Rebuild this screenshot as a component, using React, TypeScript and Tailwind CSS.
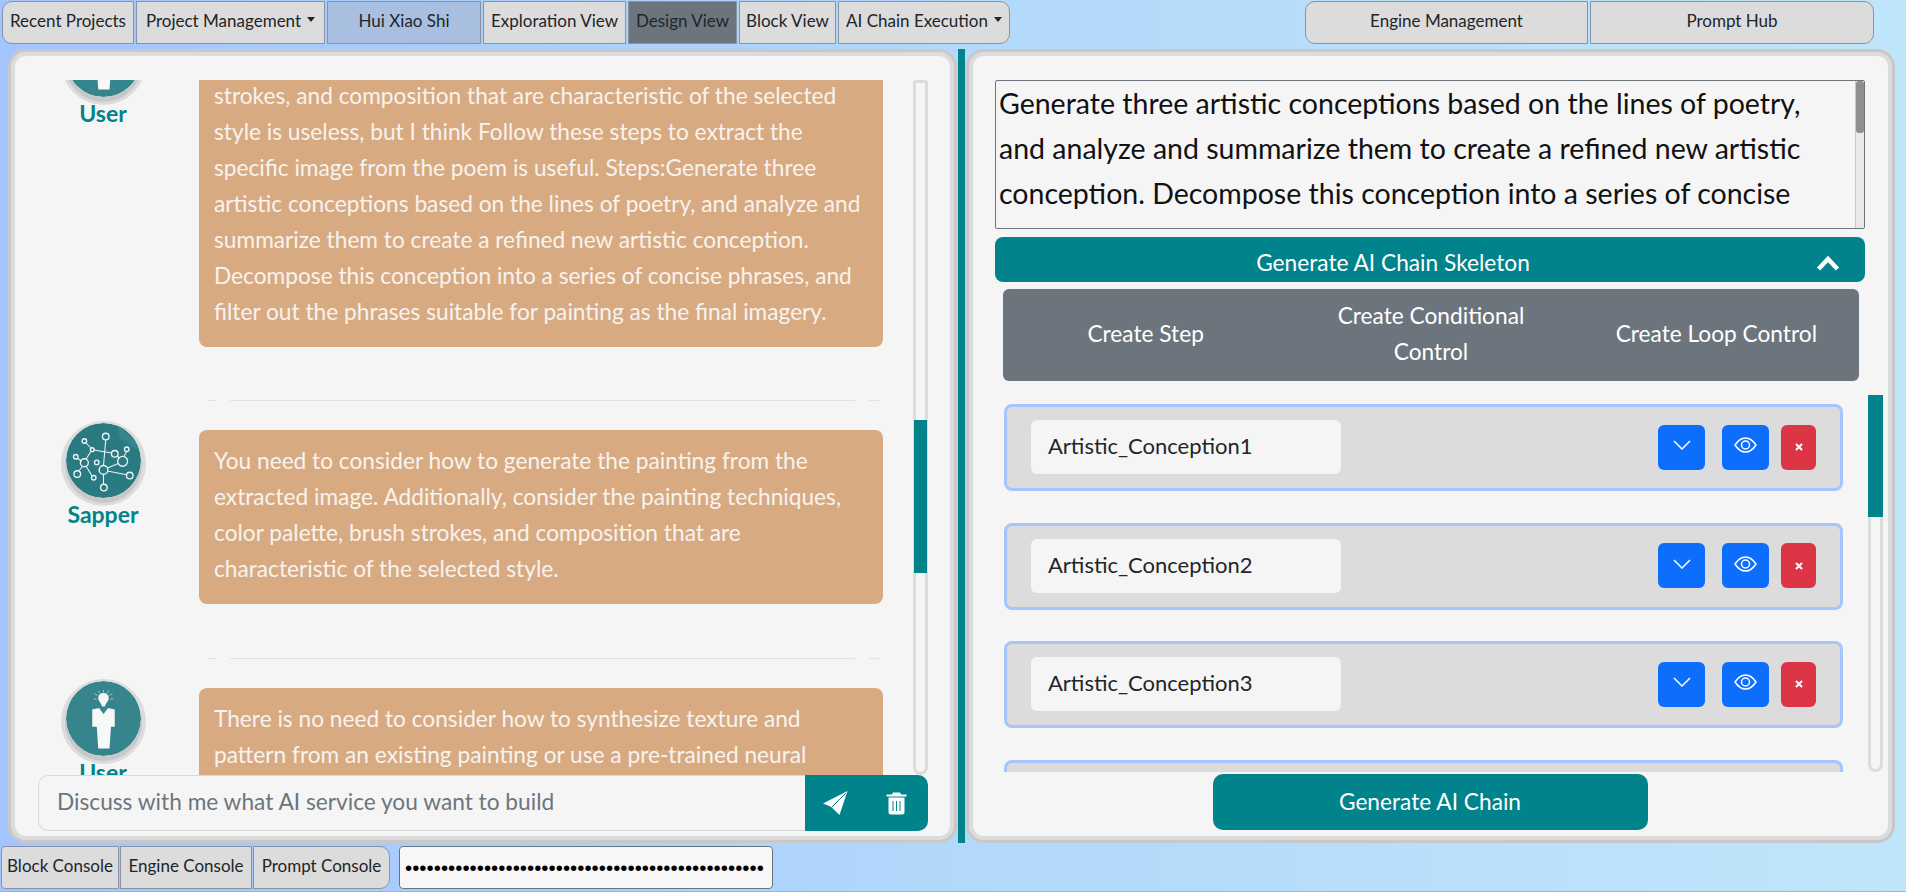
import React from "react";

const TEAL = "bg-[#00838a]";

function TopBtn({ w, children, cls = "", bg = "bg-[#dcdcdc]" }: { w: string; children: React.ReactNode; cls?: string; bg?: string }) {
  return (
    <div className={`${w} ${bg} h-[43px] flex items-center justify-center border border-[#8a93a3] text-[17px] text-[#212529] shrink-0 pb-[4px] ${cls}`}>
      {children}
    </div>
  );
}

function Caret() {
  return <span className="inline-block ml-[6px] mb-[3px] border-x-[4px] border-x-transparent border-t-[5px] border-t-[#212529]" />;
}

function AvatarSapper() {
  const nodes: [number, number, number][] = [
    [53, 18, 4.4], [24.5, 24, 3], [35, 35.5, 2.5], [65, 41, 4.4], [81, 35, 3], [75.5, 51, 6.6], [13, 45, 3], [24.5, 53, 5.3],
    [41, 52.5, 3], [15, 68, 4.4], [37, 73, 3], [50, 62.5, 5.8], [85, 70, 4.4], [50.5, 86, 4.4],
  ];
  const lines = [
    [53, 22, 50, 57], [26, 26, 34, 34], [37, 36, 61, 40], [68, 44, 72, 47], [81, 38, 77, 45], [33, 38, 27, 48], [15, 47, 21, 51],
    [17, 64, 22, 58], [27, 58, 35, 71], [55, 60, 70, 54], [55, 64, 81, 69], [50, 68, 50, 82],
  ];
  return (
    <svg viewBox="0 0 100 100" className="w-[75px] h-[75px] rounded-full block">
      <circle cx="50" cy="50" r="50" fill="#2a7a82" />
      <path d="M68 3A50 50 0 0 1 98 38L72 20Z" fill="#37858c" />
      {lines.map((l, i) => (
        <line key={i} x1={l[0]} y1={l[1]} x2={l[2]} y2={l[3]} stroke="#eef5f5" strokeWidth="1.4" />
      ))}
      {nodes.map((n, i) => (
        <circle key={i} cx={n[0]} cy={n[1]} r={n[2]} fill="none" stroke="#eef5f5" strokeWidth="1.8" />
      ))}
    </svg>
  );
}

function AvatarUser() {
  return (
    <svg viewBox="0 0 100 100" className="w-[75px] h-[75px] rounded-full block">
      <circle cx="50" cy="50" r="50" fill="#37858c" />
      <path d="M43 23c0-5 3-7 7-7s7 2 7 7c0 4-4 6-5 11h-4c-1-5-5-7-5-11Z" fill="#f3f7f7" />
      <g stroke="#cfe2e3" strokeWidth="0.9">
        <line x1="37" y1="24" x2="41" y2="24" />
        <line x1="59" y1="24" x2="63" y2="24" />
        <line x1="38" y1="17" x2="42" y2="19" />
        <line x1="62" y1="17" x2="58" y2="19" />
        <line x1="43" y1="13" x2="45" y2="16" />
        <line x1="57" y1="13" x2="55" y2="16" />
        <line x1="50" y1="12" x2="50" y2="15" />
      </g>
      <path d="M35 38L44 36L50 44L56 36L65 38V61H60L58 90H43L41 61H35Z" fill="#f7f9f9" />
    </svg>
  );
}

function Avatar({ label, kind }: { label: string; kind: "user" | "sapper" }) {
  return (
    <div className="w-[130px] shrink-0 flex flex-col items-center">
      <div className="rounded-full w-[75px] h-[75px] shadow-[0_4px_0_1px_#c8c8c8,0_3px_0_5px_#dcdcdc]">
        {kind === "user" ? <AvatarUser /> : <AvatarSapper />}
      </div>
      <div className="text-[#00838a] text-[23px] font-bold leading-[24px] mt-[4px]">{label}</div>
    </div>
  );
}

function Bubble({ children }: { children: React.ReactNode }) {
  return (
    <div className="w-[684px] shrink-0 mt-[7px] bg-[#d8aa82] rounded-[8px] pl-[15px] pr-[15px] pt-[13px] pb-[17px] text-[22.7px] leading-[36px] text-[#f7f3ee]">
      {children}
    </div>
  );
}

function Sep({ top = "mt-[53px]" }: { top?: string }) {
  return (
    <div className={`ml-[170px] flex gap-[14px] h-px mb-[22px] ${top}`}>
      <div className="w-[8px] bg-[#dee2e6]" />
      <div className="w-[625px] bg-[#dee2e6]" />
      <div className="w-[10px] bg-[#dee2e6]" />
    </div>
  );
}

function ScrollTrack({ children }: { children: React.ReactNode }) {
  return (
    <div className="w-[15px] shrink-0 h-full flex flex-col border-[3px] border-[#dcdcdc] bg-[#f5f5f5] rounded-b-[8px] rounded-t-[3px]">
      {children}
    </div>
  );
}

function StepCard({ name, cut = false }: { name: string; cut?: boolean }) {
  if (cut) {
    return <div className="h-[60px] shrink-0 border-[3px] border-b-0 border-[#a4c6fd] bg-[#dcdcdc] rounded-t-[8px]" />;
  }
  return (
    <div className="h-[87px] shrink-0 mb-[31.5px] border-[3px] border-[#a4c6fd] bg-[#dcdcdc] rounded-[8px] flex items-center pl-[24px] pr-[24px] pb-[1px]">
      <div className="w-[310px] h-[54px] rounded-[6px] bg-[#f5f5f5] flex items-center pl-[17px] pb-[3px] text-[22px] text-[#212529]">{name}</div>
      <div className="flex-1" />
      <div className="w-[47px] h-[45px] rounded-[6px] bg-[#0d6efd] flex items-center justify-center pb-[4px]">
        <svg width="18" height="10" viewBox="0 0 18 10" fill="none" stroke="#fff" strokeWidth="1.5"><path d="M1 1l8 8 8-8" /></svg>
      </div>
      <div className="w-[47px] h-[45px] rounded-[6px] bg-[#0d6efd] flex items-center justify-center ml-[17px] pb-[4px]">
        <svg width="23" height="16" viewBox="0 0 23 16" fill="none" stroke="#fff" strokeWidth="1.5">
          <path d="M1 8c3-4.500 6.500-7 10.500-7S19 3.500 22 8c-3 4.500-6.500 7-10.500 7S4 12.500 1 8Z" />
          <circle cx="11.500" cy="8" r="4" />
        </svg>
      </div>
      <div className="w-[35px] h-[45px] rounded-[6px] bg-[#dc3545] flex items-center justify-center ml-[12px]">
        <svg width="8" height="8" viewBox="0 0 8 8" stroke="#fff" strokeWidth="2"><path d="M1 1l6 6M7 1l-6 6" /></svg>
      </div>
    </div>
  );
}

export default function App() {
  return (
    <div className="w-[1906px] h-[892px] overflow-hidden flex flex-col bg-gradient-to-r from-[#a3c4fd] via-[#b2d8fb] to-[#c0e6fb] border-b border-[#9fb4c8] font-['Lato','Open_Sans',sans-serif]">
      <div className="h-[49px] shrink-0 flex pt-[1px] pl-[2px]">
        <div className="flex gap-[2px]">
          <TopBtn w="w-[132px]" cls="rounded-l-[10px]">Recent Projects</TopBtn>
          <TopBtn w="w-[189px]">Project Management<Caret /></TopBtn>
          <TopBtn w="w-[154px]" bg="bg-[#a9bfdf]">Hui Xiao Shi</TopBtn>
          <TopBtn w="w-[143px]">Exploration View</TopBtn>
          <TopBtn w="w-[109px]" bg="bg-[#6c757d]">Design View</TopBtn>
          <TopBtn w="w-[97px]">Block View</TopBtn>
          <TopBtn w="w-[172px]" cls="rounded-r-[10px]">AI Chain Execution<Caret /></TopBtn>
        </div>
        <div className="flex-1" />
        <div className="flex gap-[2px] pr-[32px]">
          <TopBtn w="w-[283px]" cls="rounded-l-[10px]">Engine Management</TopBtn>
          <TopBtn w="w-[284px]" cls="rounded-r-[10px]">Prompt Hub</TopBtn>
        </div>
      </div>

      <div className="h-[794px] shrink-0 flex pl-[8px]">
        <div className="w-[949px] h-full border-[3px] border-[#c8c8c8] rounded-[18px] bg-[#f5f5f5] shadow-[inset_0_0_0_4px_#dcdcdc] pt-[28px] pb-[9px] pl-[27px] pr-[26px] flex flex-col">
          <div className="h-[695px] shrink-0 flex">
            <div className="w-[875px] shrink-0 overflow-hidden">
              <div className="-mt-[58px]">
                <div className="flex items-start">
                  <Avatar label="User" kind="user" />
                  <div className="w-[31px] shrink-0" />
                  <Bubble>
                    consider the painting techniques, color palette, brush
                    <br />
                    strokes, and composition that are characteristic of the selected style is useless, but I think Follow these steps to extract the specific image from the poem is useful. Steps:Generate three artistic conceptions based on the lines of poetry, and analyze and summarize them to create a refined new artistic conception. Decompose this conception into a series of concise phrases, and filter out the phrases suitable for painting as the final imagery.
                  </Bubble>
                </div>
                <Sep />
                <div className="flex items-start">
                  <Avatar label="Sapper" kind="sapper" />
                  <div className="w-[31px] shrink-0" />
                  <Bubble>
                    You need to consider how to generate the painting from the extracted image. Additionally, consider the painting techniques, color palette, brush strokes, and composition that are characteristic of the selected style.
                  </Bubble>
                </div>
                <Sep top="mt-[54px]" />
                <div className="flex items-start">
                  <Avatar label="User" kind="user" />
                  <div className="w-[31px] shrink-0" />
                  <Bubble>
                    There is no need to consider how to synthesize texture and pattern from an existing painting or use a pre-trained neural network to generate the painting.
                  </Bubble>
                </div>
              </div>
            </div>
            <ScrollTrack>
              <div className="h-[337px]" />
              <div className="h-[153px] bg-[#00838a] -mx-[2px]" />
            </ScrollTrack>
          </div>
          <div className="h-[56px] shrink-0 flex">
            <div className="flex-1 rounded-l-[10px] border border-[#d5dae0] border-r-0 bg-[#f5f5f5] flex items-center pl-[18px] pb-[2px] text-[22.7px] text-[#6c757d]">
              Discuss with me what AI service you want to build
            </div>
            <div className={`w-[123px] ${TEAL} rounded-r-[10px] flex items-center pl-[17px]`}>
              <svg width="26" height="26" viewBox="0 0 26 26">
                <path d="M25.500 1 1 13.500l7.500 3 .5.2L17.500 25Z" fill="#fff" />
                <path d="M24 3 10 17" stroke="#00838a" strokeWidth="1" />
              </svg>
              <svg width="21" height="24" viewBox="0 0 21 24" className="ml-[38px]">
                <path d="M7 1.500h7l1 2h5.500v2H.5v-2H6Z" fill="#fff" />
                <path d="M2.500 6.500h16V21a2.500 2.500 0 0 1-2.500 2.500H5A2.500 2.500 0 0 1 2.500 21Z" fill="#fff" />
                <path d="M7 10v10M10.500 10v10M14 10v10" stroke="#00838a" strokeWidth="1" />
              </svg>
            </div>
          </div>
        </div>

        <div className="w-[7px] h-full bg-[#00838a] ml-[1px] shrink-0" />

        <div className="w-[929px] ml-[1px] h-full border-[3px] border-[#c8c8c8] rounded-[18px] bg-[#f5f5f5] shadow-[inset_0_0_0_4px_#dcdcdc] pt-[28px] pb-[9px] pl-[26px] pr-[4px] flex flex-col">
          <div className="w-[870px] h-[149px] shrink-0 border border-[#6c757d] flex overflow-hidden rounded-[2px]">
            <div className="flex-1 pl-[3px] pr-[30px] text-[28.5px] leading-[45px] text-[#111]">
              Generate three artistic conceptions based on the lines of poetry, and analyze and summarize them to create a refined new artistic conception. Decompose this conception into a series of concise
            </div>
            <div className="w-[9px] bg-[#e9e9e9] shrink-0 border-l border-[#c9c9c9]">
              <div className="h-[52px] bg-[#8f8f8f] rounded-[3px]" />
            </div>
          </div>
          <div className={`w-[870px] h-[45px] mt-[8px] shrink-0 ${TEAL} rounded-[8px] flex items-center text-white text-[22.7px]`}>
            <div className="w-[796px] text-center pt-[8px]">Generate AI Chain Skeleton</div>
            <svg width="24" height="16" viewBox="0 0 24 16" className="ml-[25px] mt-[7px]" fill="none" stroke="#fff" strokeWidth="4.500"><path d="M2.500 14 12 4l9.500 10" /></svg>
          </div>
          <div className="w-[856px] ml-[8px] h-[92px] mt-[7px] shrink-0 bg-[#6c757d] rounded-[6px] grid grid-cols-3 text-white text-[22.7px] leading-[36px] text-center items-center pb-[2px]">
            <div>Create Step</div>
            <div className="px-[40px]">Create Conditional Control</div>
            <div>Create Loop Control</div>
          </div>
          <div className="h-[377px] mt-[14px] shrink-0 flex overflow-hidden">
            <div className="w-[839px] ml-[9px] shrink-0 mt-[9px] flex flex-col">
              <StepCard name="Artistic_Conception1" />
              <StepCard name="Artistic_Conception2" />
              <StepCard name="Artistic_Conception3" />
              <StepCard name="" cut />
            </div>
            <div className="ml-[25px] w-[15px] shrink-0 h-full flex flex-col">
              <div className="h-[122px] bg-[#00838a] shrink-0" />
              <div className="flex-1 border-[3px] border-t-0 border-[#dcdcdc] bg-[#f5f5f5] rounded-b-[8px]" />
            </div>
          </div>
          <div className="flex justify-center w-[870px] pt-[2px]">
            <div className={`w-[435px] h-[56px] ${TEAL} rounded-[10px] flex items-center justify-center text-white text-[22.7px]`}>Generate AI Chain</div>
          </div>
        </div>
      </div>

      <div className="h-[43px] mt-[3px] shrink-0 flex pl-[1px]">
        <TopBtn w="w-[118px]" cls="rounded-l-[4px]">Block Console</TopBtn>
        <TopBtn w="w-[132px] ml-[1px]">Engine Console</TopBtn>
        <TopBtn w="w-[137px] ml-[1px]" cls="rounded-r-[10px]">Prompt Console</TopBtn>
        <div className="w-[374px] ml-[9px] h-[43px] bg-[#f7f7f7] border border-[#6c757d] rounded-[4px] flex items-center pl-[5px] pt-[1px] text-[#000] text-[20.5px] overflow-hidden font-['Liberation_Sans',sans-serif]">
          ••••••••••••••••••••••••••••••••••••••••••••••••••
        </div>
      </div>
    </div>
  );
}
